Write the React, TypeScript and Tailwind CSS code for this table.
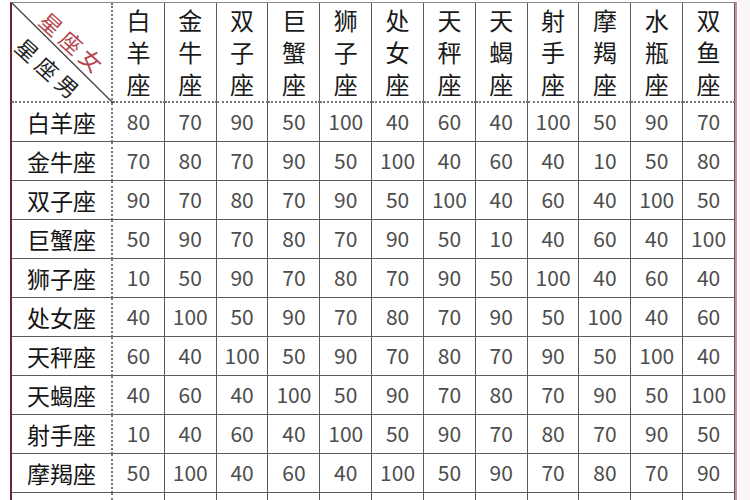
import React from "react";

const names = ["白羊座", "金牛座", "双子座", "巨蟹座", "狮子座", "处女座", "天秤座", "天蝎座", "射手座", "摩羯座", "水瓶座", "双鱼座"];

const data: number[][] = [
  [80, 70, 90, 50, 100, 40, 60, 40, 100, 50, 90, 70],
  [70, 80, 70, 90, 50, 100, 40, 60, 40, 10, 50, 80],
  [90, 70, 80, 70, 90, 50, 100, 40, 60, 40, 100, 50],
  [50, 90, 70, 80, 70, 90, 50, 10, 40, 60, 40, 100],
  [10, 50, 90, 70, 80, 70, 90, 50, 100, 40, 60, 40],
  [40, 100, 50, 90, 70, 80, 70, 90, 50, 100, 40, 60],
  [60, 40, 100, 50, 90, 70, 80, 70, 90, 50, 100, 40],
  [40, 60, 40, 100, 50, 90, 70, 80, 70, 90, 50, 100],
  [10, 40, 60, 40, 100, 50, 90, 70, 80, 70, 90, 50],
  [50, 100, 40, 60, 40, 100, 50, 90, 70, 80, 70, 90],
  [90, 50, 100, 40, 60, 40, 100, 50, 90, 70, 80, 70],
  [70, 80, 50, 100, 40, 60, 40, 100, 50, 90, 70, 80],
];

const font = { fontFamily: '"Noto Sans CJK SC", "Noto Sans", sans-serif' };

export default function App() {
  return (
    <div className="w-[750px] h-[500px] overflow-hidden bg-[#fbf6f7] relative" style={font}>
      <div className="absolute left-0 top-0 w-[10px] h-[500px] bg-white" />
      <div className="ml-[10px] pt-[2px] bg-white w-[728px]">
        <div className="w-[727px] border-l-2 border-l-[#6e2530] border-t-[1.5px] border-t-[#8a8a8a] border-r-2 border-r-[#c98e99]">
          <div className="grid grid-cols-[101px_repeat(12,minmax(0,1fr))] grid-rows-[100px_repeat(12,39px)]">
            {/* corner */}
            <div className="relative border-b-2 border-r-2 border-dotted border-[#777]">
              <svg className="absolute inset-0" width="101" height="100" viewBox="0 0 101 100">
                <line x1="0" y1="0" x2="101" y2="100" stroke="#444" strokeWidth="1.3" />
              </svg>
              <span className="absolute left-[62px] top-[40px] -translate-x-1/2 -translate-y-1/2 rotate-[42deg] text-[22px] leading-none tracking-[5px] text-[#b5434c] whitespace-nowrap">
                星座女
              </span>
              <span className="absolute left-[38px] top-[66px] -translate-x-1/2 -translate-y-1/2 rotate-[42deg] text-[22px] leading-none tracking-[5px] text-[#1e1e1e] whitespace-nowrap">
                星座男
              </span>
            </div>
            {names.map((n, i) => (
              <div
                key={"h" + i}
                className="flex flex-col items-center justify-center border-b-2 border-b-[#777] border-dotted text-[24px] leading-[32px] text-[#1a1a1a] border-r-[1.5px] border-r-[#5c5c5c] [border-right-style:solid]"
              >
                {n.split("").map((c, j) => (
                  <span key={j}>{c}</span>
                ))}
              </div>
            ))}
            {data.map((row, r) => (
              <React.Fragment key={"r" + r}>
                <div className="flex items-center justify-center border-r-2 border-r-[#777] border-dotted border-b-[1.5px] border-b-[#5c5c5c] [border-bottom-style:solid] text-[23px] text-[#151515]">
                  {names[r]}
                </div>
                {row.map((v, c) => (
                  <div
                    key={c}
                    className="flex items-center justify-center border-r-[1.5px] border-b-[1.5px] border-[#5c5c5c] text-[21px] text-[#4d4d4d]"
                  >
                    {v}
                  </div>
                ))}
              </React.Fragment>
            ))}
          </div>
        </div>
      </div>
    </div>
  );
}
